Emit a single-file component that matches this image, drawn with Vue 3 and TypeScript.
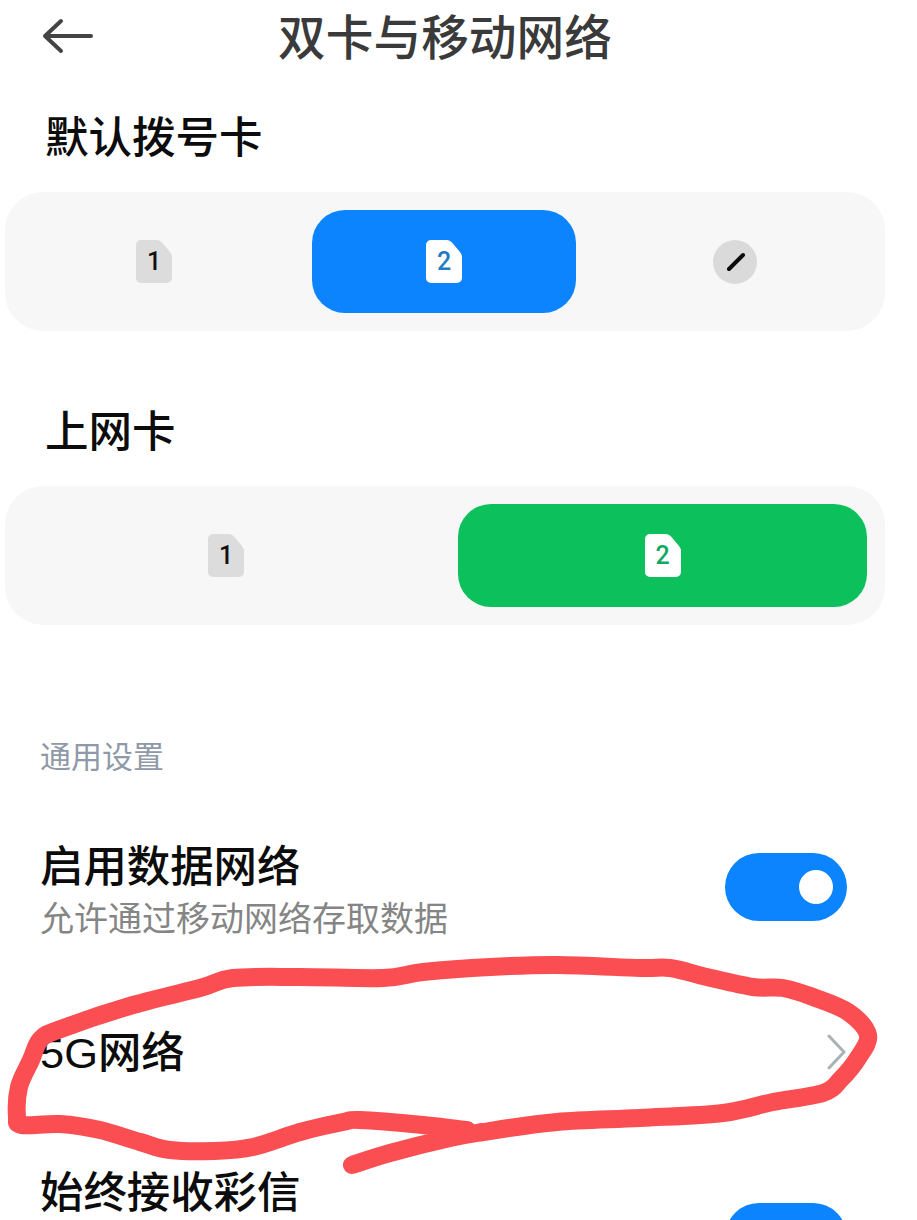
<script setup lang="ts">
type Pt = [number, number]

const pts: Pt[] = [
  [352, 1165], [390, 1153], [450, 1138], [483, 1132], [557, 1122], [640, 1118], [723, 1113],
  [773, 1102], [823, 1093], [841, 1079], [858, 1058], [868, 1035], [848, 1012], [813, 997],
  [783, 988], [753, 987], [707, 977], [670, 968], [640, 968], [557, 965], [490, 967],
  [423, 972], [383, 978], [300, 977], [233, 978], [200, 988], [133, 1005], [58, 1030],
  [40, 1040], [31, 1060], [19, 1087], [17, 1117], [22, 1125], [60, 1124], [100, 1130],
  [140, 1142], [170, 1150], [213, 1151], [253, 1147], [300, 1132], [343, 1122], [360, 1120],
  [423, 1125], [467, 1130],
]

function smooth(p: Pt[]): string {
  let d = `M${p[0][0]} ${p[0][1]}`
  for (let i = 0; i < p.length - 1; i++) {
    const a = p[Math.max(i - 1, 0)]
    const b = p[i]
    const c = p[i + 1]
    const e = p[Math.min(i + 2, p.length - 1)]
    const c1x = b[0] + (c[0] - a[0]) / 6
    const c1y = b[1] + (c[1] - a[1]) / 6
    const c2x = c[0] - (e[0] - b[0]) / 6
    const c2y = c[1] - (e[1] - b[1]) / 6
    d += ` C${c1x.toFixed(1)} ${c1y.toFixed(1)} ${c2x.toFixed(1)} ${c2y.toFixed(1)} ${c[0]} ${c[1]}`
  }
  return d
}

const scribble = smooth(pts)
const simPath = 'M5 0H21Q24 0 26 2.5L34 12Q36 14.5 36 17V38a5 5 0 0 1-5 5H5a5 5 0 0 1-5-5V5a5 5 0 0 1 5-5Z'
</script>

<template>
  <div class="page">
    <header class="header">
      <svg class="back" width="52" height="36" viewBox="0 0 52 36" fill="none">
        <path d="M19 3 3 18l16 15M3 18h46" stroke="#444" stroke-width="4" stroke-linecap="round" stroke-linejoin="round" />
      </svg>
      <h1 class="title">双卡与移动网络</h1>
    </header>

    <h2 class="section first">默认拨号卡</h2>
    <div class="card">
      <div class="cell cell-dial">
        <span class="sim">
          <svg width="36" height="43" viewBox="0 0 36 43"><path :d="simPath" fill="#dcdcdc" /></svg>
          <b class="digit dark">1</b>
        </span>
      </div>
      <div class="selected blue">
        <span class="sim">
          <svg width="36" height="43" viewBox="0 0 36 43"><path :d="simPath" fill="#fff" /></svg>
          <b class="digit blue-text">2</b>
        </span>
      </div>
      <div class="cell cell-edit">
        <svg width="44" height="44" viewBox="0 0 44 44">
          <circle cx="22" cy="22" r="22" fill="#dadada" />
          <path d="M16 29 30 15" stroke="#0a0a0a" stroke-width="4" stroke-linecap="round" />
        </svg>
      </div>
    </div>

    <h2 class="section second">上网卡</h2>
    <div class="card">
      <div class="cell cell-data">
        <span class="sim">
          <svg width="36" height="43" viewBox="0 0 36 43"><path :d="simPath" fill="#dcdcdc" /></svg>
          <b class="digit dark">1</b>
        </span>
      </div>
      <div class="selected green">
        <span class="sim">
          <svg width="36" height="43" viewBox="0 0 36 43"><path :d="simPath" fill="#fff" /></svg>
          <b class="digit green-text">2</b>
        </span>
      </div>
    </div>

    <div class="group">通用设置</div>

    <div class="row row-data">
      <div>
        <div class="row-title">启用数据网络</div>
        <div class="row-sub">允许通过移动网络存取数据</div>
      </div>
      <span class="toggle"><i class="knob"></i></span>
    </div>

    <div class="row row-5g">
      <div class="row-title">5G网络</div>
      <svg class="chevron" width="20" height="36" viewBox="0 0 20 36" fill="none">
        <path d="M2 2 17 18 2 34" stroke="#a9b2b4" stroke-width="3" stroke-linecap="round" stroke-linejoin="round" />
      </svg>
    </div>

    <div class="row row-mms">
      <div class="row-title">始终接收彩信</div>
      <span class="toggle low"><i class="knob"></i></span>
    </div>

    <svg class="scribble" width="917" height="1220" viewBox="0 0 917 1220" fill="none">
      <path :d="scribble" stroke="#fa4e52" stroke-width="18" stroke-linecap="round" stroke-linejoin="round" />
    </svg>
  </div>
</template>

<style scoped>
.page {
  position: relative;
  width: 917px;
  height: 1220px;
  overflow: hidden;
  background: #fff;
  font-family: "Liberation Sans", "Noto Sans CJK SC", sans-serif;
  color: #0c0c0c;
}
.header {
  position: relative;
  height: 76px;
  display: flex;
  align-items: flex-start;
  justify-content: center;
  padding-right: 27px;
}
.back {
  position: absolute;
  left: 42px;
  top: 18px;
}
.title {
  margin: 0;
  font-size: 47.7px;
  line-height: 78px;
  font-weight: 500;
  color: #3a3a3a;
}
.section {
  margin: 0 0 24px 45px;
  font-size: 43.5px;
  line-height: 60px;
  font-weight: 500;
}
.section.first {
  margin-top: 32px;
}
.section.second {
  margin-top: 71px;
}
.card {
  margin-left: 5px;
  width: 880px;
  height: 139px;
  box-sizing: border-box;
  padding: 18px 18px 18px 0;
  border-radius: 38px;
  background: #f7f7f8;
  display: flex;
  align-items: stretch;
}
.cell {
  display: flex;
  align-items: center;
  justify-content: center;
}
.cell-dial {
  width: 298px;
  margin-right: 9px;
}
.cell-edit {
  flex: 1;
  padding-left: 8px;
  margin-right: -18px;
}
.cell-data {
  width: 442px;
  margin-right: 11px;
}
.selected {
  display: flex;
  align-items: center;
  justify-content: center;
  border-radius: 33px;
}
.blue {
  width: 264px;
  background: #0c84fe;
}
.green {
  flex: 1;
  background: #0cc15c;
}
.sim {
  position: relative;
  width: 36px;
  height: 43px;
  display: flex;
  align-items: center;
  justify-content: center;
}
.sim svg {
  position: absolute;
  inset: 0;
}
.digit {
  position: relative;
  font-family: Roboto, "Liberation Sans", sans-serif;
  font-size: 25px;
  line-height: 43px;
  font-weight: 500;
}
.dark {
  color: #111;
}
.blue-text {
  color: #1f7cc4;
}
.green-text {
  color: #12a863;
}
.group {
  margin: 113px 0 0 40px;
  font-size: 31px;
  line-height: 40px;
  color: #8f9aa8;
}
.row {
  display: flex;
  justify-content: space-between;
  padding: 0 70px 0 40px;
}
.row-data {
  margin-top: 64px;
  align-items: center;
}
.row-5g {
  margin-top: 87px;
  height: 50px;
  align-items: center;
}
.row-mms {
  margin-top: 90px;
  align-items: flex-start;
}
.row-title {
  font-size: 43.4px;
  line-height: 50px;
  font-weight: 500;
}
.row-sub {
  margin-top: 5px;
  font-size: 34px;
  line-height: 44px;
  color: #858585;
}
.chevron {
  margin-top: -3px;
}
.toggle {
  position: relative;
  width: 122px;
  height: 68px;
  border-radius: 34px;
  background: #0c84fe;
  margin-bottom: 9px;
}
.toggle.low {
  margin-top: 35px;
}
.knob {
  position: absolute;
  right: 14px;
  top: 17px;
  width: 34px;
  height: 34px;
  border-radius: 50%;
  background: #fff;
}
.scribble {
  position: absolute;
  left: 0;
  top: 0;
  pointer-events: none;
}
</style>
